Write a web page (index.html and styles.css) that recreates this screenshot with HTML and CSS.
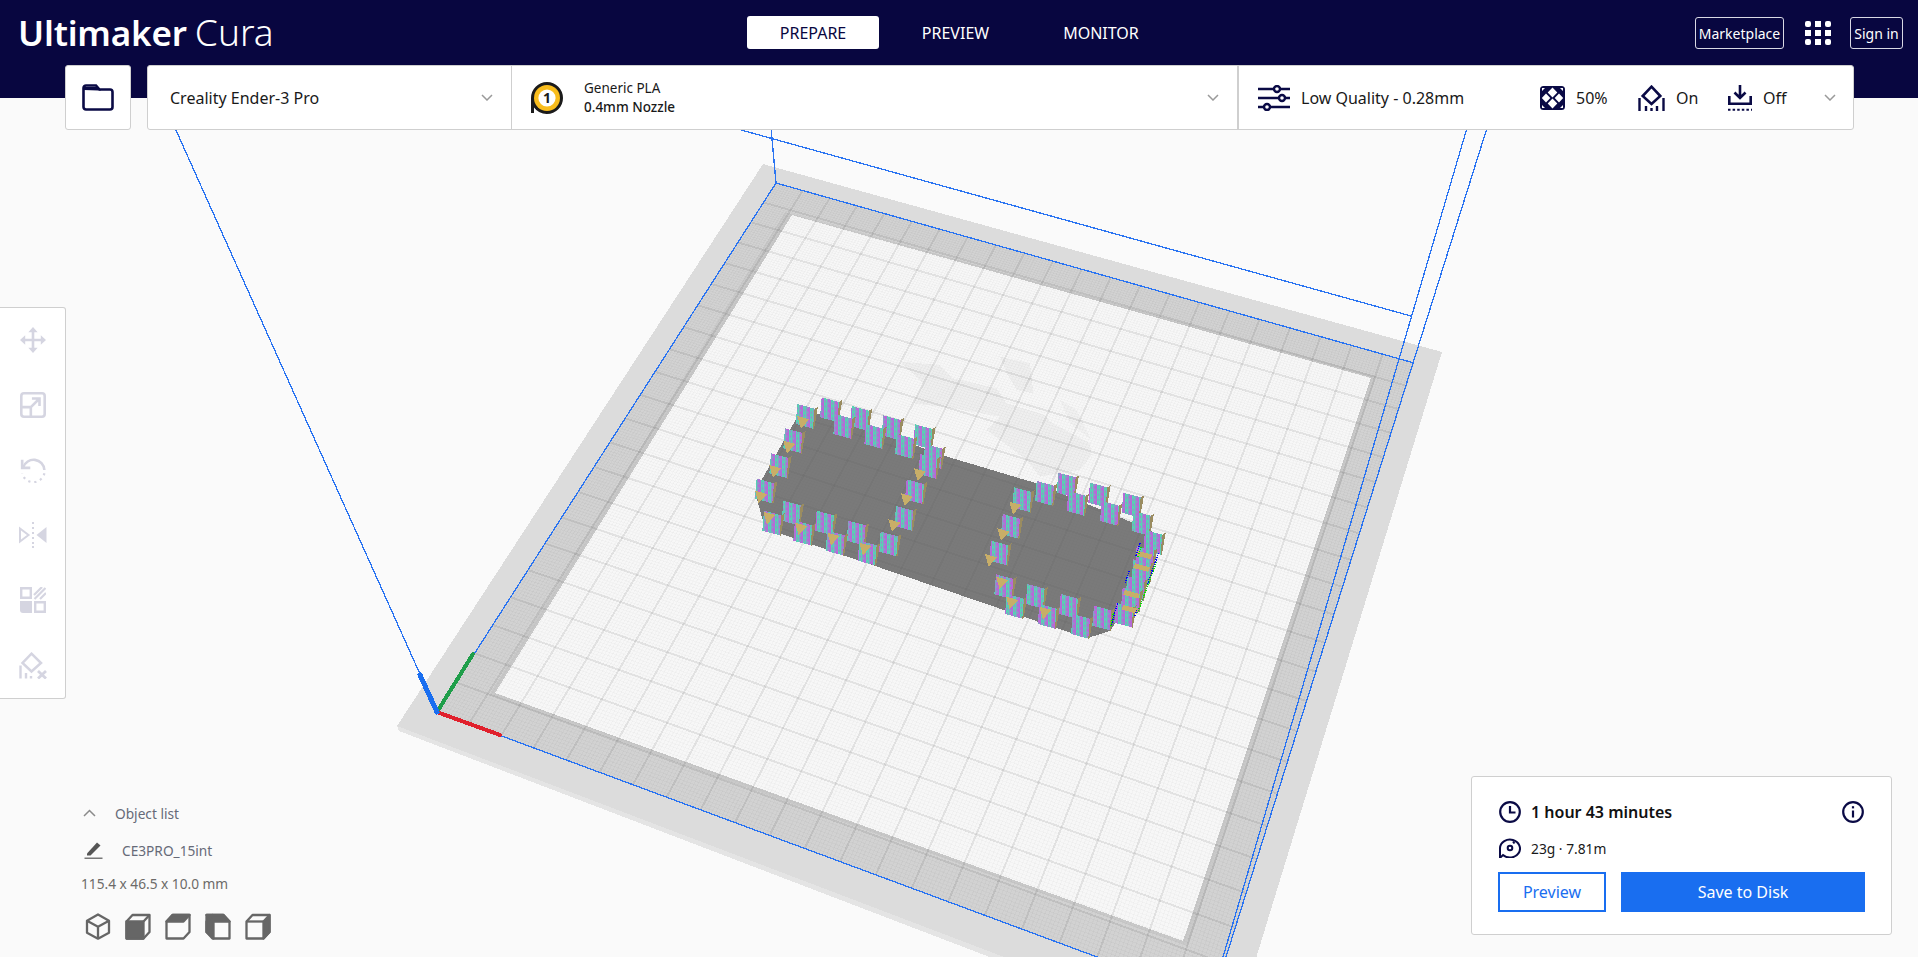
FILE: index.html
```html
<!DOCTYPE html>
<html lang="en">
<head>
  <meta charset="UTF-8" />
  <title>Ultimaker Cura</title>
  <link rel="stylesheet" href="styles.css">
</head>
<body>

  <!-- 3D build plate, filled in by scene.js -->
  <svg class="scene" id="scene" width="1918" height="957" viewBox="0 0 1918 957" shape-rendering="crispEdges">
    <defs>
      <pattern id="layers" width="21" height="15" patternUnits="userSpaceOnUse" patternTransform="skewY(16)">
        <rect width="21" height="15" fill="#b868d8"/>
        <rect width="10" height="15" fill="#58d0b4"/>
        <rect x="3" y="3" width="3" height="6" fill="#b868d8"/>
        <rect x="14" y="6" width="3" height="6" fill="#58d0b4"/>
      </pattern>
    </defs>
  </svg>

  <!-- Top bar -->
  <header class="header">
    <div class="logo"><b>Ultimaker</b> <span>Cura</span></div>
    <nav class="tabs">
      <a class="tab active" href="#">PREPARE</a>
      <a class="tab" href="#">PREVIEW</a>
      <a class="tab" href="#">MONITOR</a>
    </nav>
    <div class="account">
      <a class="outline-btn market" href="#">Marketplace</a>
      <svg class="apps" width="26" height="24" viewBox="0 0 26 24" fill="#fff">
        <rect width="6" height="6" rx="2"/><rect x="10" width="6" height="6"/><rect x="20" width="6" height="6" rx="2"/>
        <rect y="9" width="6" height="6"/><rect x="10" y="9" width="6" height="6"/><rect x="20" y="9" width="6" height="6"/>
        <rect y="18" width="6" height="6" rx="2"/><rect x="10" y="18" width="6" height="6"/><rect x="20" y="18" width="6" height="6" rx="2"/>
      </svg>
      <a class="outline-btn signin" href="#">Sign in</a>
    </div>
  </header>

  <!-- Printer / material / profile bar -->
  <div class="toolbar">
    <button class="folder-btn">
      <svg width="32" height="27" viewBox="0 0 32 27" fill="none" stroke="#0a0a45" stroke-width="2.6">
        <path d="M1.5 4a2.5 2.5 0 0 1 2.5-2.5h10l3.5 4H28a2.5 2.5 0 0 1 2.5 2.5v15a2.5 2.5 0 0 1-2.5 2.5H4A2.5 2.5 0 0 1 1.5 23z"/>
        <path d="M2 3h14l3 3.5h-3L2 6z" fill="#0a0a45" stroke="none"/>
      </svg>
    </button>
    <div class="selector">
      <div class="machine">
        <span>Creality Ender-3 Pro</span>
        <svg class="chevron" width="12" height="7" viewBox="0 0 12 7"><path d="M1 1l5 5 5-5" fill="none" stroke="#9a9a9a" stroke-width="1.5"/></svg>
      </div>
      <div class="material">
        <svg width="32" height="32" viewBox="0 0 32 32">
          <path d="M0 31V16a16 16 0 1 1 16 16 16 16 0 0 1-13-6.5V31z" fill="#1b1b1b"/>
          <circle cx="16" cy="16" r="13" fill="#f9bd1d"/>
          <circle cx="16" cy="16" r="8.6" fill="#fff"/>
          <text x="16" y="21" text-anchor="middle" class="spool-num">1</text>
        </svg>
        <div class="material-text">
          <span>Generic PLA</span>
          <strong>0.4mm Nozzle</strong>
        </div>
        <svg class="chevron" width="12" height="7" viewBox="0 0 12 7"><path d="M1 1l5 5 5-5" fill="none" stroke="#9a9a9a" stroke-width="1.5"/></svg>
      </div>
      <div class="profile">
        <svg width="32" height="26" viewBox="0 0 32 26" fill="#fff" stroke="#0a0a45" stroke-width="2.4">
          <path d="M0 4h32M0 13h32M0 22h32"/>
          <circle cx="19" cy="4" r="3"/><circle cx="24" cy="13" r="3"/><circle cx="9" cy="22" r="3"/>
        </svg>
        <span class="quality">Low Quality - 0.28mm</span>
        <svg class="infill-icon" width="25" height="24" viewBox="0 0 25 24">
          <rect width="25" height="24" rx="3.5" fill="#0a0a45"/>
          <path d="M12.500 1.500l4.800 5-4.800 5-4.800-5zM12.500 12.500l4.800 5-4.800 5-4.800-5zM6 7.500l4.300 4.500L6 16.500 1.800 12zM19 7.500l4.200 4.500-4.200 4.500-4.300-4.500zM2 2h3L2 5zM23 2h-3l3 3zM2 22h3l-3-3zM23 22h-3l3-3z" fill="#fff"/>
        </svg>
        <span class="value infill-val">50%</span>
        <svg class="support-icon" width="27" height="26" viewBox="0 0 27 26" fill="none" stroke="#0a0a45">
          <path d="M13.500 1.700l8.800 9.300-8.800 8-8.800-8z" stroke-width="2.600"/>
          <path d="M1.500 13v13M8 21v5M13.500 23v3M19 21v5M25.500 13v13" stroke-width="2.400"/>
        </svg>
        <span class="value support-val">On</span>
        <svg class="adhesion-icon" width="24" height="26" viewBox="0 0 24 26" fill="none" stroke="#0a0a45" stroke-width="2.600">
          <path d="M12 0v12M6.500 7.500l5.500 5.500 5.500-5.500M1.300 11v7.700h21.400V11"/>
          <path d="M0 24.800h24" stroke-width="2" stroke-dasharray="2.500 2.100"/>
        </svg>
        <span class="value">Off</span>
        <svg class="chevron profile-chevron" width="12" height="7" viewBox="0 0 12 7"><path d="M1 1l5 5 5-5" fill="none" stroke="#9a9a9a" stroke-width="1.5"/></svg>
      </div>
    </div>
  </div>

  <!-- Left tools -->
  <aside class="tools">
    <svg width="26" height="26" viewBox="0 0 24 24" fill="#d5d5e1"><path d="M12 0l4.300 4.800H13.200V10.800h6V7.700L24 12l-4.800 4.300v-3.100h-6v6h3.100L12 24l-4.300-4.800h3.100v-6h-6v3.100L0 12l4.800-4.300v3.100h6v-6H7.700z"/></svg>
    <svg width="26" height="26" viewBox="0 0 24 24" fill="none" stroke="#d5d5e1" stroke-width="2.400"><rect x="1.200" y="1.200" width="21.600" height="21.600" rx="2.500"/><path d="M1.200 14h8.800v8.800M10.500 13.500l7.500-7.500M11 6h7v7"/></svg>
    <svg width="26" height="26" viewBox="0 0 24 24" fill="none" stroke="#d5d5e1" stroke-width="2.400"><path d="M3 9.500a10 10 0 0 1 19.500 2.500"/><path d="M2 2.500v7.500h7.500"/><path d="M22.500 15a10.500 10.500 0 0 1-20.500 0" stroke-width="2" stroke-dasharray="2 3.600"/></svg>
    <svg width="28" height="26" viewBox="0 0 28 26" fill="#d5d5e1"><path d="M13 0h2v2h-2zM13 5h2v2h-2zM13 10h2v2h-2zM13 15h2v2h-2zM13 20h2v2h-2zM13 24h2v2h-2z"/><path d="M1 6.500l8.500 6.500-8.500 6.500z" fill="none" stroke="#d5d5e1" stroke-width="2"/><path d="M27.500 5v16L17.500 13z"/></svg>
    <svg width="26" height="26" viewBox="0 0 26 26" fill="none" stroke="#d5d5e1" stroke-width="2.400"><path d="M1.200 1.200h9.600v9.600H1.200zM15.200 15.200h9.600v9.600h-9.600z"/><path d="M0 14h12v12H3a3 3 0 0 1-3-3z" fill="#d5d5e1" stroke="none"/><path d="M14 8l8-8M14.500 12l11-11M20 12l6-6" stroke-width="2.200"/></svg>
    <svg width="28" height="27" viewBox="0 0 28 27" fill="none" stroke="#d5d5e1"><path d="M12.500 1.700l9.500 9.300-9.500 8.500L3.500 11z" stroke-width="2.500"/><path d="M1.500 13.500v13M7 21v5.500M12 24v2.500" stroke-width="2.400"/><path d="M19 19l8 7.500M27 19l-8 7.500" stroke-width="2.800"/></svg>
  </aside>

  <!-- Object list -->
  <section class="objects">
    <div class="objects-head">
      <svg width="13" height="8" viewBox="0 0 13 8"><path d="M1 7l5.500-5.500L12 7" fill="none" stroke="#8a8a8a" stroke-width="1.500"/></svg>
      <span>Object list</span>
    </div>
    <div class="objects-name">
      <svg width="19" height="18" viewBox="0 0 19 18" fill="#555"><path d="M3 12.500L13 1.500l3.500 3L6.500 14.500H3z"/><rect x="0.500" y="16.500" width="18" height="1.500" fill="#777"/></svg>
      <span>CE3PRO_15int</span>
    </div>
    <div class="objects-size">115.4 x 46.5 x 10.0 mm</div>
    <div class="views">
      <svg width="26" height="27" viewBox="0 0 26 27" fill="none" stroke="#666" stroke-width="2.300" stroke-linejoin="round"><path d="M13 1.500l11 6.200v12l-11 6-11-6v-12zM2 7.700l11 6 11-6M13 13.700v12"/></svg>
      <svg width="26" height="27" viewBox="0 0 26 27" fill="none" stroke="#666" stroke-width="2.300" stroke-linejoin="round"><path d="M1.500 8.500l6-6.500h17v17l-6 6.500h-17z"/><path d="M1.500 8.500h17v17h-17z" fill="#666"/><path d="M18.500 8.500l6-6.500"/></svg>
      <svg width="26" height="27" viewBox="0 0 26 27" fill="none" stroke="#666" stroke-width="2.300" stroke-linejoin="round"><path d="M1.500 8.500l6-6.500h17v17l-6 6.500h-17z"/><path d="M1.500 8.500l6-6.500h17l-6 6.500z" fill="#666"/></svg>
      <svg width="26" height="27" viewBox="0 0 26 27" fill="none" stroke="#666" stroke-width="2.300" stroke-linejoin="round"><path d="M7.500 2h11l6 6.500v17h-17l-6-6.500V8.500z" fill="none"/><path d="M1.500 2h6l1 6.500v17l-7-6.500z" fill="#666"/><path d="M1.500 2h17l6 6.500H8.500z" fill="#666"/></svg>
      <svg width="26" height="27" viewBox="0 0 26 27" fill="none" stroke="#666" stroke-width="2.300" stroke-linejoin="round"><path d="M1.500 8.500l6-6.500h17v17l-6 6.500h-17z"/><path d="M18.500 8.500l6-6.500v17l-6 6.500z" fill="#666"/><path d="M1.500 8.500h17"/></svg>
    </div>
  </section>

  <!-- Slice result -->
  <section class="result">
    <div class="result-row">
      <svg width="22" height="22" viewBox="0 0 22 22" fill="none" stroke="#0a0a45" stroke-width="2.200"><circle cx="11" cy="11" r="9.800"/><path d="M11 5v6.500h5.500"/></svg>
      <strong class="time">1 hour 43 minutes</strong>
      <svg class="info" width="22" height="22" viewBox="0 0 22 22" fill="none" stroke="#0a0a45" stroke-width="2.200"><circle cx="11" cy="11" r="9.800"/><path d="M11 9.500v7" /><path d="M11 5.200v2.200"/></svg>
    </div>
    <div class="result-row weight">
      <svg width="22" height="20" viewBox="0 0 22 20" fill="none" stroke="#0a0a45" stroke-width="2"><path d="M1 19.500V10a10 9 0 1 1 3 7l-2 2z"/><circle cx="11" cy="10" r="2.300"/><path d="M14 3.500l1.500 2"/></svg>
      <span>23g · 7.81m</span>
    </div>
    <div class="result-actions">
      <button class="btn-preview">Preview</button>
      <button class="btn-save">Save to Disk</button>
    </div>
  </section>

  <script src="scene.js"></script>
</body>
</html>
```

FILE: styles.css
```css
/* Reset & base */
* { box-sizing: border-box; margin: 0; padding: 0; }
body {
  position: relative;
  width: 100%;
  height: 100vh;
  overflow: hidden;
  font-family: "Noto Sans", "Open Sans", sans-serif;
  background: #fafafa;
  color: #191919;
}
a { text-decoration: none; color: inherit; }
button { font-family: inherit; cursor: pointer; }
svg { display: block; flex: none; }

/* 3D scene sits under everything */
.scene { position: absolute; top: 0; left: 0; }

/* Header */
.header {
  position: relative;
  height: 98px;
  display: flex;
  align-items: flex-start;
  background: #080640;
  color: #fff;
}
.logo {
  width: 747px;
  padding: 7px 0 0 18px;
  line-height: 50px;
  white-space: nowrap;
}
.logo b { font-size: 35px; font-weight: 600; letter-spacing: -0.2px; }
.logo span { font-size: 37px; font-weight: 300; margin-left: 4px; }
.tabs {
  display: flex;
  gap: 12px;
  padding-top: 16px;
}
.tab {
  width: 132px;
  height: 33px;
  display: flex;
  align-items: center;
  justify-content: center;
  font-size: 16px;
  border-radius: 3px;
}
.tab:nth-child(2) { padding-right: 3px; }
.tab.active { background: #fff; color: #080640; }
.account {
  margin-left: auto;
  padding: 17px 15px 0 0;
  display: flex;
  align-items: center;
  gap: 19px;
}
.outline-btn {
  height: 32px;
  display: flex;
  align-items: center;
  justify-content: center;
  border: 1px solid #d8d8e4;
  border-radius: 3px;
  font-size: 14px;
}
.market { width: 89px; margin-right: 2px; }
.signin { width: 53px; }

/* Printer bar */
.toolbar {
  position: absolute;
  top: 65px;
  left: 65px;
  display: flex;
  gap: 16px;
}
.folder-btn, .selector {
  height: 65px;
  background: #fff;
  border: 1px solid #cfcfcf;
  border-radius: 3px;
}
.folder-btn {
  width: 66px;
  display: flex;
  align-items: center;
  justify-content: center;
}
.selector { display: flex; width: 1707px; }
.selector > div {
  display: flex;
  align-items: center;
  height: 100%;
}
.machine {
  width: 363px;
  padding: 0 18px 0 22px;
  justify-content: space-between;
  font-size: 16px;
}
.material {
  width: 726px;
  padding: 0 18px 0 19px;
  border-left: 1px solid #cfcfcf;
  font-size: 14px;
  line-height: 19px;
}
.material-text {
  display: flex;
  flex-direction: column;
  margin-left: 21px;
  margin-right: auto;
  font-size: 13.5px;
}
.material-text strong { font-weight: 500; }
.spool-num { font: 700 14px "Noto Sans", sans-serif; fill: #1b1b1b; }
.profile {
  flex: 1;
  padding-left: 19px;
  border-left: 2px solid #cfcfcf;
  font-size: 16px;
}
.quality { margin-left: 11px; width: 239px; }
.value { margin-left: 11px; }
.infill-val { width: 62px; }
.support-val { width: 52px; }
.profile-chevron { margin-left: 37px; }

/* Left tools */
.tools {
  position: absolute;
  top: 307px;
  left: 0;
  width: 66px;
  height: 392px;
  background: #fff;
  border: 1px solid #cfcfcf;
  border-left: none;
  border-radius: 0 3px 3px 0;
  display: flex;
  flex-direction: column;
  align-items: center;
  justify-content: space-around;
}

/* Object list */
.objects {
  position: absolute;
  top: 803px;
  left: 81px;
  font-size: 13.7px;
  color: #666a78;
}
.objects-head {
  display: flex;
  align-items: center;
  gap: 19px;
  height: 20px;
  padding-left: 2px;
}
.objects-name {
  display: flex;
  align-items: center;
  gap: 19px;
  height: 22px;
  margin-top: 16px;
  padding-left: 3px;
}
.objects-size { margin-top: 12px; line-height: 22px; color: #6c6a68; }
.views {
  display: flex;
  gap: 14px;
  margin-top: 18px;
  padding-left: 4px;
}

/* Result panel */
.result {
  position: absolute;
  top: 776px;
  left: 1471px;
  width: 421px;
  height: 159px;
  padding: 24px 26px 0;
  background: #fff;
  border: 1.5px solid #cfcfcf;
  border-radius: 3px;
}
.result-row {
  display: flex;
  align-items: center;
  gap: 10px;
  padding: 0 0 0 1px;
  height: 22px;
  font-size: 16px;
}
.time { font-weight: 600; color: #111; font-size: 16px; }
.info { margin-left: auto; margin-right: 1px; }
.weight { margin-top: 14px; font-size: 13.8px; }
.result-actions {
  display: flex;
  gap: 15px;
  margin-top: 13px;
}
.result-actions button {
  height: 40px;
  font-size: 16px;
  border-radius: 0;
}
.btn-preview {
  width: 108px;
  background: #fff;
  border: 2px solid #196ef0;
  color: #196ef0;
}
.btn-save {
  width: 244px;
  background: #196ef0;
  border: none;
  color: #fff;
}
```

FILE: scene.js
```js
const NS = 'http://www.w3.org/2000/svg';
const scene = document.getElementById('scene');

function el(tag, attrs, parent) {
  const node = document.createElementNS(NS, tag);
  for (const k in attrs) node.setAttribute(k, attrs[k]);
  (parent || scene).appendChild(node);
  return node;
}
function poly(points, fill, parent) {
  return el('polygon', { points: points.map(q => q.join(',')).join(' '), fill: fill }, parent);
}
function line(a, b, stroke, width, parent) {
  return el('line', { x1: a[0], y1: a[1], x2: b[0], y2: b[1], stroke: stroke, 'stroke-width': width }, parent);
}

// Maps the unit square on to a quad, so the grid gets proper perspective
function homography(q) {
  const [x0, y0] = q[0], [x1, y1] = q[1], [x2, y2] = q[2], [x3, y3] = q[3];
  const dx1 = x1 - x2, dx2 = x3 - x2, sx = x0 - x1 + x2 - x3;
  const dy1 = y1 - y2, dy2 = y3 - y2, sy = y0 - y1 + y2 - y3;
  const den = dx1 * dy2 - dx2 * dy1;
  const g = (sx * dy2 - dx2 * sy) / den, h = (dx1 * sy - sx * dy1) / den;
  const a = x1 - x0 + g * x1, b = x3 - x0 + h * x3;
  const d = y1 - y0 + g * y1, e = y3 - y0 + h * y3;
  return (u, v) => {
    const w = g * u + h * v + 1;
    return [(a * u + b * v + x0) / w, (d * u + e * v + y0) / w];
  };
}

// Build plate
const volume = [[776, 183], [1414, 363], [1213, 1000], [437, 712]];
poly([[397, 726], [1230, 1043], [1230, 1049], [399, 731]], '#e4e4e4');
poly([[763, 164], [1442, 352], [1230, 1043], [397, 726]], '#dcdcdc');
poly(volume, '#d2d2d2');
poly([[785, 212], [1376, 376], [1188, 946], [489, 695]], '#c9c9c9');
poly([[792, 215], [1371, 378], [1183, 941], [495, 693]], '#f7f7f7');

const map = homography(volume);
const fine = el('g', { stroke: 'rgba(0,0,0,0.018)' });
for (let i = 1; i < 220; i++) {
  if (i % 10 === 0) continue;
  line(map(i / 220, 0), map(i / 220, 1), 'inherit', 1, fine);
  line(map(0, i / 220), map(1, i / 220), 'inherit', 1, fine);
}
for (let i = 1; i < 22; i++) {
  line(map(i / 22, 0), map(i / 22, 1), 'rgba(0,0,0,0.08)', 2);
  line(map(0, i / 22), map(1, i / 22), 'rgba(0,0,0,0.08)', 2);
}

// Model, points are in a 3x space so they read the same as a zoomed crop
const model = el('g', { transform: 'translate(740 380) scale(0.33333)' });

// faint logo lying on the plate
poly([[480, -55], [600, -45], [640, -5], [770, 25], [800, 70], [915, 105], [930, 125], [1050, 190], [1055, 225], [1020, 270], [900, 290], [860, 240], [740, 150], [780, 110], [640, 85], [520, 70], [550, 10]], 'rgba(0,0,0,0.03)', model);
poly([[780, -70], [870, -50], [880, 40], [830, 30], [800, -20]], 'rgba(0,0,0,0.03)', model);
poly([[960, 60], [1010, 90], [1055, 180], [990, 130]], 'rgba(0,0,0,0.025)', model);

poly([[45, 335], [75, 445], [1040, 775], [1112, 752], [1265, 490], [1232, 450], [890, 310], [605, 225], [265, 100], [175, 105]], 'rgba(90,90,90,0.8)', model);

const TAN = '#c8ae68', SIDE = '#9a8c60';
function tooth(x, y) {
  const w = 52, h = 60;
  poly([[x + w, y + 14], [x + w + 10, y + 8], [x + w - 2, y + h + 16], [x + w - 5, y + h + 14]], SIDE, model);
  poly([[x, y], [x + w, y + 14], [x + w - 5, y + h + 14], [x - 5, y + h]], 'url(#layers)', model);
}
function wedge(x, y) {
  poly([[x, y], [x + 36, y + 10], [x + 11, y + 38]], TAN, model);
}

const leftBlock = [
  [245, 52], [335, 78], [430, 106], [525, 133], [172, 72], [285, 102], [378, 132], [470, 162],
  [135, 145], [93, 220], [50, 296], [555, 192], [540, 222], [500, 298], [468, 378], [422, 455],
  [130, 362], [230, 392], [325, 422], [72, 392], [165, 422], [262, 452], [358, 482]
];
const rightBlock = [
  [890, 303], [955, 278], [1050, 308], [1150, 338], [985, 333], [1085, 363], [1180, 393], [1215, 450],
  [822, 322], [788, 402], [753, 482], [768, 583], [800, 642], [862, 612], [898, 672], [962, 642], [998, 702], [1062, 677],
  [1190, 498], [1180, 538], [1162, 588], [1148, 622], [1128, 668]
];
leftBlock.concat(rightBlock).forEach(t => tooth(t[0], t[1]));

[[172, 108], [130, 182], [88, 255], [45, 332], [70, 395], [165, 428], [262, 458], [358, 488],
 [522, 265], [483, 340], [445, 418], [808, 365], [772, 445], [735, 522], [768, 590], [798, 650], [898, 680]].forEach(t => wedge(t[0], t[1]));
[[1192, 492], [1155, 610], [1150, 655], [1185, 530]].forEach(t => poly([[t[0], t[1] + 20], [t[0] + 45, t[1] + 32], [t[0] + 40, t[1] + 46], [t[0] - 5, t[1] + 34]], TAN, model));

// overhang pixels along the right wall
const dots = el('g', { 'stroke-dasharray': '4 3' }, model);
[[[1200, 490], [1188, 528], '#0000ff'], [[1168, 572], [1155, 612], '#0000ff'], [[1132, 670], [1114, 735], '#0000ff'],
 [[1204, 500], [1192, 535], '#00e000'], [[1120, 700], [1112, 740], '#00e000'],
 [[1256, 518], [1222, 612], '#0000ff'], [[1250, 545], [1192, 700], '#00e000'], [[1190, 690], [1184, 712], '#0000ff']]
  .forEach(d => line(d[0], d[1], d[2], 4, dots));

// Build volume outline
[[[776, 183], [1414, 363]], [[776, 183], [437, 712]], [[437, 712], [1213, 1000]],
 [[437, 712], [175, 128]], [[776, 183], [771, 128]], [[1411, 316], [734, 128]],
 [[1467, 128], [1223, 957]], [[1487, 128], [1226, 957]]
].forEach(s => line(s[0], s[1], '#2a74f2', 1.3));

// Axis arrows
const axes = el('g', { 'stroke-linecap': 'round' });
line([437, 712], [473, 654], '#1f9e4a', 4, axes);
line([437, 712], [500, 735], '#e0202c', 4, axes);
line([437, 712], [420, 675], '#196ef0', 5, axes);
```
